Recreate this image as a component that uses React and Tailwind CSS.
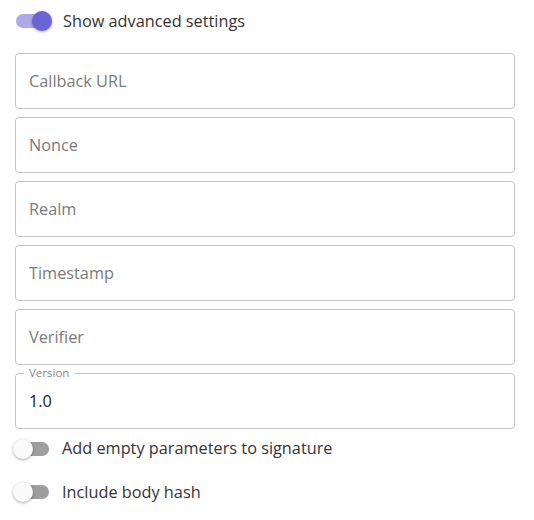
import { useState } from 'react'

const FIELDS = ['Callback URL', 'Nonce', 'Realm', 'Timestamp', 'Verifier']

function Switch({ checked, onChange }) {
  return (
    <button
      type="button"
      onClick={() => onChange(!checked)}
      className="relative w-[38px] h-[20px] flex items-center shrink-0"
    >
      <span className={`block w-[34px] h-[14px] ml-[2px] rounded-full ${checked ? 'bg-[#aeaae8]' : 'bg-[#9e9e9e]'}`} />
      <span
        className={`absolute top-0 w-[20px] h-[20px] rounded-full shadow-[0_1px_3px_rgba(0,0,0,0.35)] ${
          checked ? 'left-[18px] bg-[#6c63d4]' : 'left-0 bg-[#fafafa]'
        }`}
      />
    </button>
  )
}

function ToggleRow({ label, checked, onChange, className = '' }) {
  return (
    <label className={`flex items-center gap-[11px] pl-[13px] ${className}`}>
      <Switch checked={checked} onChange={onChange} />
      <span className="text-[16.3px] text-[#333]">{label}</span>
    </label>
  )
}

export default function App() {
  const [advanced, setAdvanced] = useState(true)
  const [emptyParams, setEmptyParams] = useState(false)
  const [bodyHash, setBodyHash] = useState(false)

  return (
    <div className="w-[534px] h-[520px] bg-white pt-[9px] px-[15px]" style={{ fontFamily: '"Open Sans", "Noto Sans", sans-serif' }}>
      <ToggleRow label="Show advanced settings" checked={advanced} onChange={setAdvanced} className="-ml-[15px] pl-[14px]" />

      <div className="flex flex-col gap-[8px] mt-[20px] w-[500px]">
        {FIELDS.map(f => (
          <input
            key={f}
            placeholder={f}
            className="h-[56px] w-full border border-[#c4c4c4] rounded-[4px] px-[13px] text-[16.3px] text-[#333] placeholder:text-[#7a7a7a] outline-none"
          />
        ))}
        <div className="relative">
          <input
            defaultValue="1.0"
            className="h-[56px] w-full border border-[#c4c4c4] rounded-[4px] px-[13px] text-[16.3px] text-[#222] outline-none"
          />
          <span className="absolute left-[9px] -top-[7px] px-[5px] bg-white text-[11.5px] leading-[14px] text-[#888]">Version</span>
        </div>
      </div>

      <div className="-ml-[15px] mt-[7px] flex flex-col gap-[19px]">
        <ToggleRow label="Add empty parameters to signature" checked={emptyParams} onChange={setEmptyParams} />
        <ToggleRow label="Include body hash" checked={bodyHash} onChange={setBodyHash} />
      </div>
    </div>
  )
}
